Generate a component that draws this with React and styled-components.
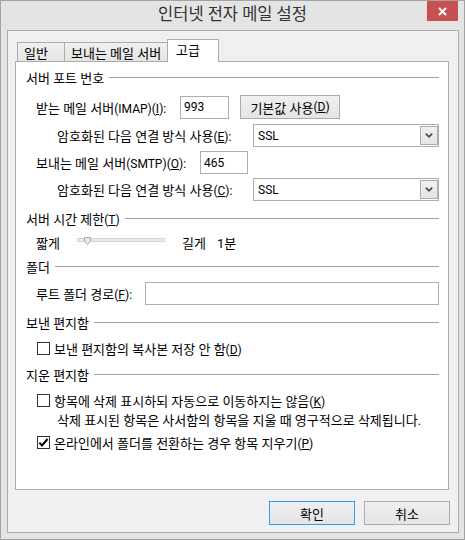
import styled, { createGlobalStyle } from "styled-components";

const GlobalStyle = createGlobalStyle`
  * { box-sizing: border-box; }
  html, body { margin: 0; padding: 0; background: #ffffff; }
  body {
    font-family: Roboto, "Noto Sans CJK KR", sans-serif;
    font-size: 13px;
    color: #000;
  }
`;

function CloseIcon() {
  return (
    <svg width="9" height="9" viewBox="0 0 9 9">
      <path d="M1 1 L8 8 M8 1 L1 8" stroke="#fff" strokeWidth="2" fill="none" />
    </svg>
  );
}

function Chevron() {
  return (
    <svg width="8" height="5" viewBox="0 0 8 5">
      <path d="M0.8 0.6 L4 3.8 L7.2 0.6" stroke="#4a4a4a" strokeWidth="1.7" fill="none" />
    </svg>
  );
}

function Tick() {
  return (
    <svg width="11" height="11" viewBox="0 0 11 11">
      <path d="M1.4 5.6 L4 8.4 L9.6 2" stroke="#000" strokeWidth="2" fill="none" />
    </svg>
  );
}

function Thumb() {
  return (
    <svg width="7" height="8" viewBox="0 0 7 8">
      <path d="M0.5 0.5 H6.5 V4.5 L3.5 7.5 L0.5 4.5 Z" fill="#e8e8e8" stroke="#a9a9a9" />
    </svg>
  );
}

// accelerator suffix like "(D)" or "(IMAP)(I):"
function Acc({ pre = "", k, post = "" }) {
  return (
    <Lat>
      {pre}(<K>{k}</K>){post}
    </Lat>
  );
}

function Select({ value }) {
  return (
    <SelectBox>
      <SelectText>{value}</SelectText>
      <DropButton>
        <Chevron />
      </DropButton>
    </SelectBox>
  );
}

function CheckRow({ checked, mt, children }) {
  return (
    <Row $mt={mt} $h={16} $indent={11}>
      <CheckBox>{checked && <Tick />}</CheckBox>
      <CheckLabel>{children}</CheckLabel>
    </Row>
  );
}

function Group({ mt, children }) {
  return (
    <GroupHeader $mt={mt}>
      <span>{children}</span>
      <GroupLine />
    </GroupHeader>
  );
}

export default function App() {
  return (
    <>
      <GlobalStyle />
      <Window>
        <TitleBar>
          <Title>인터넷 전자 메일 설정</Title>
          <CloseButton>
            <CloseIcon />
          </CloseButton>
        </TitleBar>
        <Body>
          <TabStrip>
            <Tab $w={48}>일반</Tab>
            <Tab $w={104}>보내는 메일 서버</Tab>
            <Tab $w={52} $active>고급</Tab>
          </TabStrip>
          <Panel>
            <Group mt={0}>서버 포트 번호</Group>
            <Row $mt={10} $h={24} $indent={10}>
              <Label $w={144}>받는 메일 서버<Acc pre="(IMAP)" k="I" post=":" /></Label>
              <TextBox $w={49}>993</TextBox>
              <PushButton>기본값 사용<Acc k="D" /></PushButton>
            </Row>
            <Row $mt={5} $h={23} $indent={31}>
              <Label $w={196}>암호화된 다음 연결 방식 사용<Acc k="E" post=":" /></Label>
              <Select value="SSL" />
            </Row>
            <Row $mt={4} $h={23} $indent={10}>
              <Label $w={164}>보내는 메일 서버<Acc pre="(SMTP)" k="O" post=":" /></Label>
              <TextBox $w={48}>465</TextBox>
            </Row>
            <Row $mt={4} $h={23} $indent={31}>
              <Label $w={196}>암호화된 다음 연결 방식 사용<Acc k="C" post=":" /></Label>
              <Select value="SSL" />
            </Row>

            <Group mt={9}>서버 시간 제한<Acc k="T" /></Group>
            <Row $mt={6} $h={20} $indent={10}>
              <Label $w={41}>짧게</Label>
              <SliderWrap>
                <Track />
                <ThumbSpot>
                  <Thumb />
                </ThumbSpot>
              </SliderWrap>
              <Label $w={35}>길게</Label>
              <span>1분</span>
            </Row>

            <Group mt={6}>폴더</Group>
            <Row $mt={8} $h={23} $indent={10}>
              <Label $w={109}>루트 폴더 경로<Acc k="F" post=":" /></Label>
              <TextBox />
            </Row>

            <Group mt={9}>보낸 편지함</Group>
            <CheckRow mt={10}>보낸 편지함의 복사본 저장 안 함<Acc k="D" /></CheckRow>

            <Group mt={10}>지운 편지함</Group>
            <CheckRow mt={10}>항목에 삭제 표시하되 자동으로 이동하지는 않음<Acc k="K" /></CheckRow>
            <Row $mt={3} $h={16} $indent={31}>
              삭제 표시된 항목은 사서함의 항목을 지울 때 영구적으로 삭제됩니다.
            </Row>
            <CheckRow mt={7} checked>
              온라인에서 폴더를 전환하는 경우 항목 지우기<Acc k="P" />
            </CheckRow>
          </Panel>
          <ButtonRow>
            <DialogButton $primary>확인</DialogButton>
            <DialogButton>취소</DialogButton>
          </ButtonRow>
        </Body>
      </Window>
    </>
  );
}

const Window = styled.div`
  width: 465px;
  height: 540px;
  display: flex;
  flex-direction: column;
  border: 1px solid #a3a3a3;
  background: #e4e4e4;
`;

const TitleBar = styled.div`
  height: 29px;
  display: grid;
  grid-template-columns: 1fr auto 1fr;
  align-items: start;
`;

const Title = styled.div`
  grid-column: 2;
  font-size: 16.5px;
  line-height: 27px;
  color: #333;
  white-space: nowrap;
`;

const CloseButton = styled.div`
  grid-column: 3;
  justify-self: end;
  width: 31px;
  height: 20px;
  margin-right: 6px;
  background: #c75050;
  display: flex;
  align-items: center;
  justify-content: center;
`;

const Body = styled.div`
  flex: 1;
  margin: 0 5px 6px 6px;
  border: 1px solid #adadad;
  background: #f0f0f0;
  padding: 8px 9px 7px 7px;
  display: flex;
  flex-direction: column;
`;

const TabStrip = styled.div`
  height: 22px;
  display: flex;
  align-items: flex-end;
  padding-left: 2px;
`;

const Tab = styled.div`
  position: relative;
  z-index: ${(p) => (p.$active ? 1 : 0)};
  width: ${(p) => p.$w}px;
  height: ${(p) => (p.$active ? 23 : 19)}px;
  margin-bottom: ${(p) => (p.$active ? -1 : 0)}px;
  margin-left: -1px;
  &:first-child { margin-left: 0; }
  padding: 0 0 ${(p) => (p.$active ? 3 : 0)}px ${(p) => (p.$active ? 8 : 6)}px;
  display: flex;
  align-items: center;
  white-space: nowrap;
  border: 1px solid #acacac;
  border-bottom: none;
  background: ${(p) => (p.$active ? "#ffffff" : "linear-gradient(#f0f0f0, #e5e5e5)")};
`;

const Panel = styled.div`
  flex: 1;
  border: 1px solid #acacac;
  background: #ffffff;
  padding: 7px 9px 0 10px;
  display: flex;
  flex-direction: column;
`;

const GroupHeader = styled.div`
  display: flex;
  align-items: center;
  gap: 5px;
  height: 16px;
  margin-top: ${(p) => p.$mt}px;
  white-space: nowrap;
`;

const GroupLine = styled.div`
  flex: 1;
  height: 1px;
  background: #a0a0a0;
`;

const Row = styled.div`
  display: flex;
  align-items: center;
  height: ${(p) => p.$h}px;
  margin-top: ${(p) => p.$mt}px;
  padding-left: ${(p) => p.$indent}px;
  white-space: nowrap;
`;

const Label = styled.span`
  flex-shrink: 0;
  width: ${(p) => p.$w}px;
`;

const Lat = styled.span`
  font-size: 12px;
`;

const K = styled.span`
  text-decoration: underline;
`;

const TextBox = styled.div`
  ${(p) => (p.$w ? `width: ${p.$w}px;` : "flex: 1;")}
  height: 23px;
  border: 1px solid #abadb3;
  background: #fff;
  padding-left: 3px;
  font-size: 12px;
  display: flex;
  align-items: center;
`;

const PushButton = styled.div`
  width: 100px;
  height: 24px;
  margin-left: 11px;
  border: 1px solid #acacac;
  background: linear-gradient(#f0f0f0, #e5e5e5);
  display: flex;
  align-items: center;
  justify-content: center;
`;

const SelectBox = styled.div`
  flex: 1;
  height: 23px;
  border: 1px solid #abadb3;
  background: #fff;
  padding: 1px 0 1px 1px;
  display: flex;
  align-items: stretch;
`;

const SelectText = styled.div`
  flex: 1;
  padding-left: 3px;
  font-size: 12px;
  display: flex;
  align-items: center;
`;

const DropButton = styled.div`
  width: 18px;
  border: 1px solid #acacac;
  background: linear-gradient(#f0f0f0, #e5e5e5);
  display: flex;
  align-items: center;
  justify-content: center;
`;

const SliderWrap = styled.div`
  position: relative;
  flex-shrink: 0;
  width: 88px;
  height: 20px;
  margin-right: 17px;
  padding-top: 6px;
`;

const Track = styled.div`
  height: 4px;
  background: #e7eaea;
  border: 1px solid #d6d6d6;
`;

const ThumbSpot = styled.div`
  position: absolute;
  left: 7px;
  top: 5px;
  line-height: 0;
`;

const CheckBox = styled.div`
  width: 13px;
  height: 13px;
  flex-shrink: 0;
  border: 1px solid #333;
  background: #fff;
  display: flex;
  align-items: center;
  justify-content: center;
`;

const CheckLabel = styled.span`
  margin-left: 4px;
`;

const ButtonRow = styled.div`
  display: flex;
  justify-content: flex-end;
  gap: 9px;
  margin-top: 11px;
  margin-right: -1px;
`;

const DialogButton = styled.div`
  width: 86px;
  height: 24px;
  border: 1px solid ${(p) => (p.$primary ? "#3399ff" : "#acacac")};
  background: linear-gradient(#f0f0f0, #e5e5e5);
  display: flex;
  align-items: center;
  justify-content: center;
`;
